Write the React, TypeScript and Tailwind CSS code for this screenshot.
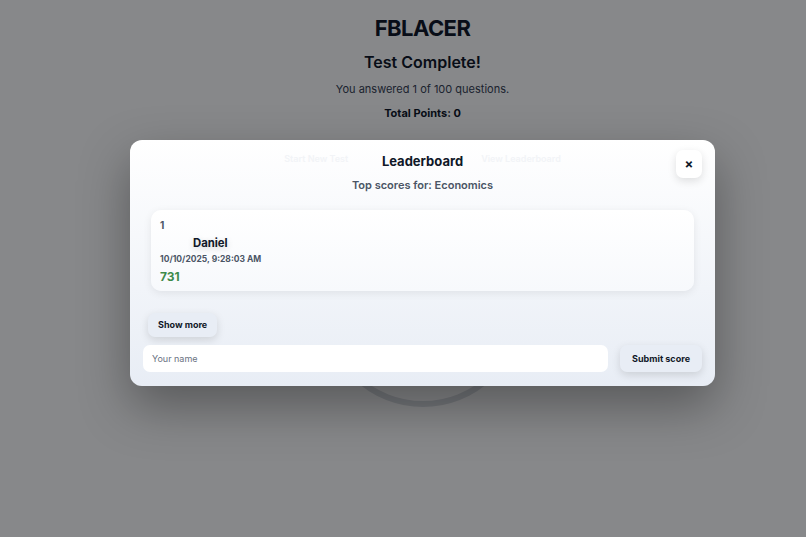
export default function App() {
  return (
    <div className="relative h-[537px] w-full overflow-hidden bg-white font-['Inter',sans-serif] text-gray-900">
      {/* page behind the modal */}
      <div className="flex flex-col items-center pl-[39px] pt-[16px]">
        <h1 className="text-[22px] font-bold leading-[24px] tracking-tight">FBLACER</h1>
        <h2 className="mt-[11px] text-[16px] font-semibold leading-[22px]">Test Complete!</h2>
        <p className="mt-[8px] text-[11px] leading-[16px] text-gray-700">You answered 1 of 100 questions.</p>
        <p className="mt-[8px] text-[11px] font-bold leading-[16px]">Total Points: 0</p>
        <div className="mt-[86px] h-[200px] w-[200px] rounded-full border-[6px] border-[#dcdfe3]" />
      </div>

      {/* overlay */}
      <div className="absolute inset-0 flex items-start justify-center bg-[rgba(0,2,6,0.47)] pl-[39px] pt-[140px]">
        <div className="relative w-[585px] rounded-[12px] bg-gradient-to-b from-white to-[#e8edf5] px-[13px] pb-[14px] pt-[12px] shadow-[0_20px_50px_rgba(0,0,0,0.35)]">
          <div className="pointer-events-none absolute left-0 right-0 top-[12px] flex justify-center gap-[133px] text-[9px] font-semibold text-[#f2f4f7]">
            <span>Start New Test</span>
            <span>View Leaderboard</span>
          </div>
          <button className="absolute right-[13px] top-[10px] flex h-[28px] w-[26px] items-center justify-center rounded-[7px] bg-white text-[13px] font-bold leading-none text-gray-900 shadow-[0_3px_8px_rgba(0,0,0,0.12)]">
            ×
          </button>
          <div className="relative flex flex-col items-center">
            <h3 className="text-[13px] font-bold leading-[18px]">Leaderboard</h3>
            <p className="mt-[7px] text-[11px] font-semibold leading-[16px] text-gray-600">Top scores for: Economics</p>
          </div>
          <div className="mx-[8px] mt-[17px] rounded-[10px] bg-gradient-to-b from-white to-[#f7f9fc] px-[9px] pb-[6px] pt-[8px] shadow-[0_2px_8px_rgba(0,0,0,0.08)]">
            <div className="text-[10px] font-bold leading-[14px] text-gray-600">1</div>
            <div className="mt-[3px] pl-[33px] text-[11.3px] font-bold leading-[16px] text-gray-900 [text-shadow:0_2px_6px_rgba(0,0,0,0.18)]">Daniel</div>
            <div className="mt-[1px] text-[8.5px] font-bold leading-[14px] text-gray-600">10/10/2025, 9:28:03 AM</div>
            <div className="mt-[3px] text-[12px] font-bold leading-[16px] text-[#3d8a4a]">731</div>
          </div>
          <button className="ml-[5px] mt-[22px] rounded-[7px] bg-[#e8edf5] px-[10px] py-[5px] text-[9px] font-bold leading-[14px] text-gray-900 shadow-[0_3px_8px_rgba(0,0,0,0.13)]">
            Show more
          </button>
          <div className="mt-[8px] flex items-center gap-[12px]">
            <input
              className="h-[27px] flex-1 rounded-[7px] bg-white px-[9px] text-[9px] text-gray-900 outline-none placeholder:text-gray-500"
              placeholder="Your name"
            />
            <button className="h-[27px] rounded-[7px] bg-[#e8edf5] px-[12px] text-[9px] font-bold leading-[14px] text-gray-900 shadow-[0_3px_8px_rgba(0,0,0,0.13)]">
              Submit score
            </button>
          </div>
        </div>
      </div>
    </div>
  );
}
